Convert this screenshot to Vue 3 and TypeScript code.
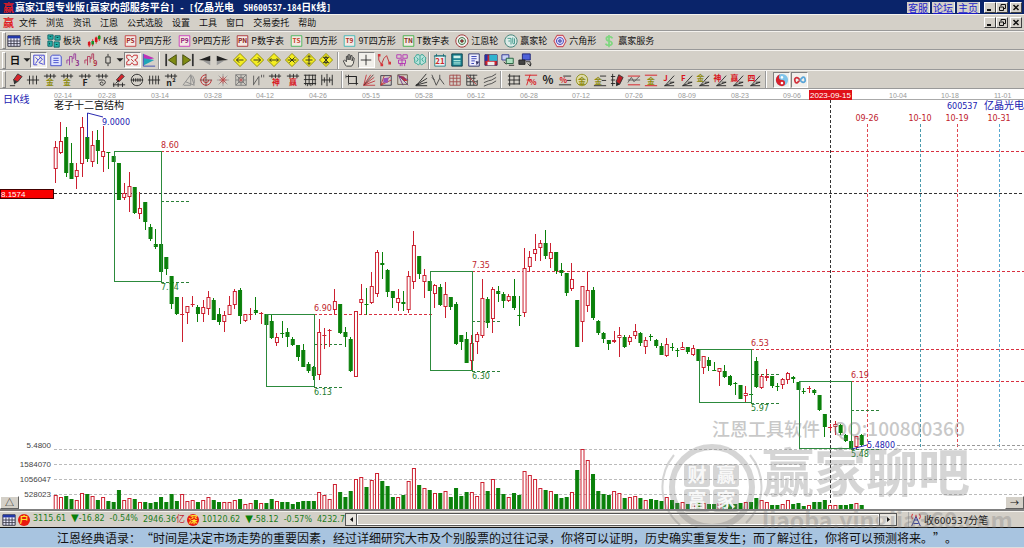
<script setup lang="ts">
interface Shape { d?: string; s?: string; f?: string; w?: number; t?: string; x?: number; y?: number; z?: number }
interface Candle { high: number; low: number; top: number; bottom: number; up: boolean; vol: number }

const BLACK = '#222'
const RED = '#d8141c'
const OLIVE = '#8c8a10'
const line = (d: string, s = BLACK, w = 1): Shape => ({ d, s, w })
const fill = (d: string, f: string, s = 'none'): Shape => ({ d, f, s })
const text = (t: string, x: number, y: number, f: string, z: number): Shape => ({ t, x, y, f, z })
const badge = (t: string, edge: string, ink: string): Shape[] => [
  fill('M1.5 1.5H14.5V14.5H1.5Z', '#f4e9e4', edge), text(t, 8, 11, ink, 8),
]
const comb = 'M1 3.5H15M4.5 1V6M8.5 1V6M12.5 1V6'
const fan = 'M2 14.5H15M2 14L15 10.5M2 14L15 6M3 14L14 1'
const diamond = fill('M8 0.5L15.5 8L8 15.5L0.5 8Z', '#f5ee20', '#8a8600')
const dia = (d: string): Shape[] => [diamond, line(d, '#222', 1)]
const signFan = (t: string, c: string): Shape[] => [line('M4 14.5H15M4 14.5L15 10.5M5 14L15 3M10 10.5H15'), text(t, 5, 9, c, 9)]

const icons: Record<string, Shape[]> = {
  table: [fill('M1 2H15V14H1Z', '#eef', '#223'), fill('M1 2H15V5H1Z', '#2338a8'), line('M1 8H15M1 11H15M4.5 5V14M8 5V14M11.5 5V14', '#334')],
  blocks: [fill('M1 1H7V6H1ZM9 2H15V7H9ZM1 8H6V14H1ZM8 9H14V15H8Z', '#27b5ac', '#0b5c60'), line('M3 3H5M11 4H13M3 10V12M10 12H12', '#033')],
  kline: [line('M2.5 8V15M6.5 6V14M10.5 3V11M14 1V8', RED), fill('M1 9H4V13H1ZM9 4H12V9H9Z', RED), fill('M5 8H8V12H5ZM12.5 2H15.5V6H12.5Z', '#189028')],
  ps: badge('PS', '#c12b30', '#9d1b1b'),
  p9: badge('P9', '#c728b8', '#941b77'),
  pn: badge('PN', '#a31f25', '#861515'),
  ts: badge('TS', '#35b04c', '#c33b22'),
  t9: badge('T9', '#2bb3b3', '#b0332c'),
  tn: badge('TN', '#2fab3a', '#7e2d1d'),
  wheel: [fill('M8 1A7 7 0 1 1 7.9 1Z', '#eee', '#9c2323'), fill('M8 4A4 4 0 1 1 7.9 4Z', '#dff0dd', '#2b5f30'), fill('M8 6.5A1.5 1.5 0 1 1 7.9 6.5Z', '#c33', '#333')],
  winwheel: [fill('M8 1A7 7 0 1 1 7.9 1Z', '#dcece8', '#327a70'), line('M4 5H8V12M5 8H7M10 4V10Q10 12 12 11V5', '#389486')],
  hexagon: [fill('M4.5 1.5H11.5L15 8L11.5 14.5H4.5L1 8Z', '#f2dce4', '#bf2638'), fill('M8 4A4 4 0 1 1 7.9 4Z', '#d6d9fa', '#3038bd'), fill('M8 6.5A1.5 1.5 0 1 1 7.9 6.5Z', '#88c', '#339')],
  dollar: [line('M12 5Q11 3 8 3Q5 3 5 5Q5 7.5 8 8Q11.5 8.5 11.5 11Q11 13 8 13Q5 13 4 11M8 1V15', '#7fd67f', 2)],
  day: [text('日', 8, 12, '#111', 12)],
  drop: [fill('M4 6H12L8 10Z', '#222')],
  net: [line('M2 2.5H14V13.5M2 13.5V2.5M4 5L7 8L4 12M8 4L12 7L8 11L13 13M11 4L7 8M2 13.5H6', '#3436d0')],
  doc: [fill('M4 2.5H12L14 4V14.5H2V4Z', '#dfe3ff', '#3a45c9'), line('M5 6H11M5 8.5H11M5 11H11', '#3a45c9')],
  wave3: [line('M1 12V8H4V14M4 8V4H7V11M7 6H9V1H11V8', '#993a9c'), text('3', 13, 15, '#8a2a8a', 8)],
  wave9: [line('M1 12V8H4V14M4 8V4H7V11M7 6H9V1H11V8', '#b03358'), text('9', 13, 15, '#b02e40', 8)],
  bar: [line('M8 1V4M8 12V15'), fill('M5.5 4.5H10.5V11.5H5.5Z', '#d4d0c8', '#222')],
  spark: [line('M2 2.5H6L8 5L10 2.5H14V6L11 8L14 10V13.5H10L8 11L6 13.5H2V10L5 8L2 6ZM7 7L10 10', '#c02026', 1)],
  flag: [fill('M2 1L14 6L2 9Z', '#c032b8'), fill('M2 6L14 8L2 14Z', '#20a5b8'), line('M1.5 1V15H15', '#3243b0')],
  first: [fill('M14 2V14L5 8Z', '#7f8b12', '#3d4409'), line('M2.5 1V15', '#333', 2)],
  last: [fill('M2 2V14L11 8Z', '#7f8b12', '#3d4409'), line('M13.5 1V15', '#333', 2)],
  prev: [fill('M14 3V9L1 8Z', '#222'), fill('M14 9V14L6 9Z', '#999')],
  next: [fill('M2 3V9L15 8Z', '#222'), fill('M2 9V14L10 9Z', '#999')],
  dleft: dia('M4 8H12M7 5L4 8L7 11'),
  dright: dia('M4 8H12M9 5L12 8L9 11'),
  dboth: dia('M3 8H13M5 6L3 8L5 10M11 6L13 8L11 10'),
  din: dia('M3 8H13M5 5L8 8L5 11M11 5L8 8L11 11'),
  dup: dia('M8 3V13M6 5L8 3L10 5M6 11L8 13L10 11M4 8H12'),
  ddown: dia('M8 3V13M5 5H11L8 8L5 5M5 11H11L8 8L5 11'),
  hand: [fill('M4 14L1.5 9L3 8L5 10V4L6.5 3.5L7 8V2L9 2V8L10 3H11.5V9L13 5L14 6L13 12L11 15H5Z', '#e8e4da', '#333')],
  cross: [line('M8 2V14M2 8H14', '#222', 1)],
  zig: [line('M2 3V8L5 13L8 6L11 3L14 11', '#c0262c'), fill('M1 1H4V4H1ZM4 12H7V15H4ZM13 10H16V13H13Z', '#d8343a')],
  cluster: [line('M2 2H7V6H2ZM9 2H14V6H9ZM4 8H12V12H4ZM8 6V15M6 15V12M11 12V15', '#b22fb2')],
  brain: [fill('M7 2Q3 1 3 4Q0 5 2 8Q1 12 4 12Q6 15 8 12Q10 15 12 12Q16 11 14 8Q16 5 13 4Q12 1 9 2L8 3Z', '#b9e3db', '#2a9d8d'), line('M8 3V12M4 5L6 7L4 10M12 5L10 7L12 10', '#2a9d8d')],
  calendar: [fill('M2 3H14V15H2Z', '#e9f3f4', '#2a7d86'), line('M1 3.5H15M4 1V4M12 1V4', '#1d6a72', 1), text('21', 8, 13, '#d02a2a', 9)],
  calc: [fill('M2 1H14V15H2Z', '#178090', '#0b3b48'), fill('M4 3H12V6H4Z', '#cfeee8'), line('M4 8.5H12M4 10.5H12M4 12.5H12', '#cfe', 1)],
  notes: [fill('M2 1H14V15H2Z', '#eef', '#222a66'), line('M5 4H11M5 6.5H11M5 9H9M5 12H8', '#2a38b0', 1), fill('M10 9L14 10L11 14Z', '#336')],
  save: [fill('M1 2H15V14H1Z', '#cf2430', '#312055'), fill('M6 2H15V9H6Z', '#2fb3cf'), fill('M4 10H12V14H4Z', '#eee'), fill('M1 2H4V9H1Z', '#2334a8')],
  screens: [fill('M1 2H9V8H1Z', '#c8d0f4', '#27318f'), fill('M6 6H14V12H6Z', '#aee0c0', '#1e5a38'), line('M9 14H15M3 10L6 13', '#222', 1)],
  send: [fill('M5 1H14V8H5Z', '#4f62d8', '#1a2070'), fill('M1 8H8V13H1Z', '#444', '#222'), line('M9 10H14V14M11 12L14 15L15 12', '#222', 1)],
  pencil: [fill('M5 8L10 1L15 4L10 10Z', '#d5252c', '#333'), fill('M5 8L10 10L6 13Z', '#333'), line('M1 14.5H7', '#222', 1)],
  ticks3: [line('M1 8H15M4 3V13M8 3V13M12 3V13', '#222', 1)],
  combgold: [line(comb), text('金', 8, 14, OLIVE, 9)],
  combf: [line(comb), text('F', 8, 15, '#222', 10)],
  combspiral: [line(comb), line('M4 8H10Q14 11 9 14Q5 14 6 11Q9 9 9 12', '#222')],
  pencilbase: [fill('M5 8L11 1L14 4L8 10Z', '#d5252c', '#333'), line('M1 13.5H15M2 11V16M7 11V16M12 11V16M4 12L8 8')],
  circleticks: [line('M8 1.5A6.5 6.5 0 1 1 7.9 1.5Z'), line('M1 8H15M4 6V10M6.5 6V10M9 6V10M11.5 6V10')],
  ticks4: [line('M1 8H15M3 3V13M6.5 3V13M10 3V13M13 3V13')],
  combn: [line(comb), text('n²', 8, 15, '#222', 10)],
  compass: [line('M1 14L10 2V14M4 10L14 14L10 2M2 14H10M12 3Q15 7 14 12', '#888')],
  redcircle: [line('M8 2A6 6 0 1 0 14 8M8 5A3 3 0 1 0 11 8', '#c0272d'), line('M1 8H15M8 1V15', '#744')],
  burst: [line('M8 1V15M1 8H15M3 3L13 13M13 3L3 13', '#999'), line('M8 4V12M4 8H12M5 5L11 11M11 5L5 11', '#c34848')],
  web: [line('M2 2H14V14H2ZM5 5H11V11H5ZM2 2L14 14M14 2L2 14M8 2V14M2 8H14', '#777'), fill('M6.5 6.5H9.5V9.5H6.5Z', '#b66')],
  ncurve: [line('M3 3V14M3 13L9 4V14M12 2V5M14.5 2V5', '#555')],
  combshen: [line(comb), text('神', 9, 14, RED, 9)],
  combwin: [line(comb), text('赢', 8, 14, RED, 9)],
  lattice: [line('M1 2.5H15M1 7.5H15M3 2V14M7 2V14M11 2V14M14 2V14M1 12H15M5 12V15M9 12V15')],
  hmark: [line('M2 2V14M14 2V14M8 1V15M2 8H14M5 5V11M11 5V11')],
  corner: [line('M4 2V12H15M1 4H13V14M4 4H13V12'), line('M1 2V6M4 14V12', '#666')],
  redfan: [line('M2 14L5 2M2 14L10 2M2 14L14 5M2 14L15 9M2 14H15', '#c0343a'), line('M2 14L13 2', '#533')],
  boxfan: [line('M2 3H14V14H2Z', '#334'), line('M2 14L6 3M2 14L14 3M2 14L14 8', '#c0343a'), fill('M5 6L11 5L10 11L5 11Z', '#9452b4')],
  boxfan2: [line('M2 2H13V13H2Z', '#654'), fill('M3 3L9 4L13 9L9 9Z', '#c0343a'), line('M3 3L14 14M3 3L8 14M3 3L14 8', '#733482')],
  blackfan: [line(fan)],
  vee: [line('M1 2L6 14L10 6L15 13M10 2V6M1 5L4 8', '#444')],
  redgrid: [line('M2 2.5H14V14H2ZM2 6H14M2 10H14M6 2V14M10 2V14', '#a24a4a')],
  grid: [line('M2 2V14H14M2 2.5H14M2 6H12M2 10H14M6 2V14M10 2V14M14 8V14', '#333'), line('M2 2L13 13', '#b44')],
  channel: [line('M1 7L6 5L10 4L15 1M1 11L6 9L10 8L15 5M1 15L6 13L10 12L15 9', '#444')],
  ladder: [line('M3 1V15M1 3.5H15M1 8H15M1 12.5H15M8 3V13M14 3V13')],
  redpct: [line('M1 2.5H15M3 14L7 2M3 8H8', RED), text('%', 10, 14, RED, 9)],
  pct: [text('%', 8, 13, '#222', 13)],
  pctlines: [line('M6 3.5H15M10 8.5H15M1 13.5H15'), text('%', 6, 11, RED, 9)],
  goldring: [fill('M8 1.5A6.5 6.5 0 1 1 7.9 1.5Z', '#dcd9a8', OLIVE), text('金', 8, 12, OLIVE, 9)],
  goldlines: [line('M8 3.5H15M10 8.5H15M1 14.5H15'), text('金', 6, 12, OLIVE, 9)],
  pencilbar: [line('M3 1V15M1 4H6M1 8H6M1 12H6'), fill('M7 10L10 2L15 5L11 13Z', '#b71f26', '#333'), fill('M7 10L11 13L7 15Z', '#222')],
  redwave: [line('M1 3.5H15M1 13.5H15', RED), line('M1 11L5 5L8 10L14 4M1 8H15', '#555')],
  goldred: [line('M1 2.5H15M1 14.5H15', RED), text('金', 8, 12, OLIVE, 9)],
  jfan: signFan('J', RED), ffan: signFan('F', RED), goldfan: signFan('金', OLIVE),
  shenfan: signFan('神', RED), winfan: signFan('赢', RED), fourfan: signFan('四', RED),
  yinyang: [fill('M8 1A7 7 0 1 1 7.9 1Z', '#7fc4ea'), fill('M8 1A7 7 0 0 0 8 15A3.5 3.5 0 0 0 8 8A3.5 3.5 0 0 1 8 1Z', '#d8202a'), fill('M8 3.5A1.5 1.5 0 1 1 7.9 3.5ZM8 10A1.5 1.5 0 1 1 7.9 10Z', '#fff')],
  infinity: [line('M8 8Q4 3 2 7Q2 12 5 11L8 8', '#d2303a', 2), line('M8 8Q12 13 14 9Q14 4 11 5L8 8', '#5aa5d8', 2)],
  antenna: [line('M8 4L3 15M8 4L13 15M6 8H10M5 12H11', '#26308f', 1), line('M4 1Q2 4 4 7M12 1Q14 4 12 7M8 2V5', RED, 1)],
}

const menus = ['文件', '浏览', '资讯', '江恩', '公式选股', '设置', '工具', '窗口', '交易委托', '帮助']
const links = ['客服', '论坛', '主页']
const tools = [
  ['table', '行情'], ['blocks', '板块'], ['kline', 'K线'], ['ps', 'P四方形'], ['p9', '9P四方形'], ['pn', 'P数字表'],
  ['ts', 'T四方形'], ['t9', '9T四方形'], ['tn', 'T数字表'], ['wheel', '江恩轮'], ['winwheel', '赢家轮'], ['hexagon', '六角形'], ['dollar', '赢家服务'],
]
const viewGroups = [
  { w: 'g-period', items: ['day', 'drop', 'net', 'doc', 'wave3', 'wave9', 'bar', 'drop', 'spark', 'flag'] },
  { w: 'g-move', items: ['first', 'last', 'prev', 'next', 'dleft', 'dright', 'dboth', 'din', 'dup', 'ddown'] },
  { w: 'g-point', items: ['hand', 'cross', 'zig', 'cluster', 'brain'] },
  { w: 'g-extra', items: ['calendar', 'calc', 'notes', 'save', 'screens', 'send'] },
]
const drawGroups = [
  { w: 'g-ruler', items: ['pencil', 'ticks3', 'combgold', 'combgold', 'combf', 'combspiral', 'pencilbase', 'circleticks', 'ticks4', 'combn', 'compass', 'redcircle', 'burst', 'web', 'ncurve', 'combshen', 'combwin', 'lattice', 'hmark'] },
  { w: 'g-fan', items: ['corner', 'redfan', 'boxfan', 'boxfan2', 'blackfan', 'vee', 'redgrid', 'grid', 'channel'] },
  { w: 'g-level', items: ['ladder', 'redpct', 'pct', 'pctlines', 'goldring', 'goldlines', 'pencilbar', 'redwave', 'goldred', 'jfan', 'ffan', 'goldfan', 'shenfan', 'winfan', 'fourfan'] },
  { w: 'g-sign', items: ['yinyang', 'infinity'] },
]
const pressed = new Set(['net', 'spark', 'cross', 'yinyang', 'infinity'])

// high, low, body top, body bottom, direction
const rows = `141,183,147,169,r 122,154,141,153,r 127,177,137,173,g 143,179,163,179,g 163,189,170,177,r 117,177,127,164,r 113,162,137,159,g 131,167,145,162,r 130,164,140,151,g 126,172,151,157,r
152,169,152,153,g 156,162,156,162,g 163,200,163,200,g 183,200,193,198,r 172,212,186,197,r 187,214,187,213,g 192,219,208,214,r 202,230,202,222,g 224,241,227,239,g 229,249,244,247,g
244,272,244,272,g 257,275,257,269,g 276,309,276,304,g 297,315,297,314,g 297,342,314,314,r 306,324,306,313,r 296,307,304,304,r 305,322,307,314,g 300,322,307,314,r 291,315,297,309,r
298,320,300,320,g 308,325,314,322,g 311,332,315,322,r 296,315,305,315,r 289,309,291,305,r 288,324,290,316,g 314,322,314,321,r 308,320,314,314,r 297,315,310,313,g 312,324,313,314,r
314,325,314,325,g 314,339,321,338,g 333,346,337,343,r 321,338,333,333,g 328,347,332,337,g 337,346,339,345,g 345,361,345,357,g 344,367,350,367,g 362,373,364,371,g 366,380,367,376,g
319,380,332,375,r 328,349,335,336,r 329,347,330,331,r 289,314,301,310,r 304,334,304,333,g 327,347,332,337,g 337,372,339,371,g 311,377,311,377,r 284,315,299,303,r 288,315,304,304,g
272,304,286,303,r 250,297,252,294,r 252,279,263,265,g 269,297,270,292,g 291,308,291,298,g 289,311,298,303,r 291,311,302,304,g 271,313,276,310,r 231,289,245,282,r 256,279,256,274,g
269,298,275,282,r 281,291,281,291,g 284,308,285,294,r 284,306,287,305,g 282,318,294,307,r 297,310,297,307,g 302,345,304,344,g 335,350,335,342,g 332,363,339,363,g 335,370,343,361,r
332,354,334,342,r 279,338,298,336,r 297,328,299,323,g 287,333,289,319,r 286,302,291,294,g 292,308,294,301,g 294,302,296,301,r 279,310,296,308,g 296,326,315,315,g 248,317,268,313,r
251,272,257,267,r 234,261,249,254,r 240,261,243,248,r 230,259,243,256,g 243,268,252,259,r 252,274,252,271,g 263,276,270,273,g 273,296,273,293,g 263,291,279,289,r 300,347,300,347,g
286,342,286,322,r 272,312,290,306,r 287,320,290,318,g 320,335,321,333,g 332,343,333,339,g 340,350,340,344,g 331,343,340,342,r 327,357,335,338,r 335,348,337,347,g 335,345,337,342,r
324,339,331,336,r 332,346,333,343,g 337,354,340,347,r 334,341,336,337,g 339,348,340,346,g 343,355,346,355,g 338,357,344,356,r 343,351,347,347,g 348,357,350,351,g 342,350,347,350,r
347,354,347,352,g 345,356,348,355,r 349,361,349,361,g 356,374,356,368,r 357,371,360,366,g 362,371,370,370,g 368,386,368,372,r 365,378,371,377,g 375,386,376,385,g 382,395,383,384,g
385,399,385,399,g 386,402,393,396,r 392,396,394,394,g 357,388,361,387,g 374,389,376,388,r 369,381,376,378,r 376,388,376,386,g 383,391,386,386,g 378,389,379,385,r 372,384,373,380,r
376,383,377,379,g 382,390,382,390,g 388,394,391,391,g 386,393,388,389,r 389,395,390,393,g 395,411,395,410,g 414,437,414,427,g 424,431,427,428,r 421,435,424,427,r 424,435,425,433,g
434,442,435,441,g 440,449,441,449,g 436,449,436,447,r 434,446,435,445,g`
const volumes = [
  14, 12, 13, 10, 9, 16, 15, 13, 9, 12, 8, 7, 19, 9, 11, 10, 7, 7, 6, 7, 12, 7, 15, 8, 15, 8, 9, 7, 9, 12, 9, 7, 7, 7, 9, 10, 5, 6, 9, 6,
  6, 10, 8, 7, 7, 5, 7, 8, 8, 8, 17, 14, 10, 25, 17, 12, 18, 30, 32, 22, 29, 36, 28, 23, 12, 12, 14, 28, 41, 24, 21, 19, 16, 16, 18, 12, 21, 13, 17, 17,
  13, 27, 18, 30, 21, 15, 12, 16, 14, 38, 34, 30, 21, 19, 18, 15, 11, 12, 17, 39, 60, 49, 35, 18, 15, 14, 18, 16, 11, 12, 13, 11, 9, 10, 9, 8, 12, 9, 6, 7,
  5, 5, 7, 6, 5, 5, 6, 5, 5, 5, 6, 7, 7, 11, 9, 7, 4, 4, 5, 9, 5, 6, 3, 4, 7, 7, 9, 4, 4, 4, 4, 5, 6, 4,
]
const candles: Candle[] = rows.split(/\s+/).map((row, i) => {
  const p = row.split(',')
  return { high: +p[0], low: +p[1], top: +p[2], bottom: +p[3], up: p[4] === 'r', vol: volumes[i] }
})
const STEP = (861.7 - 55.7) / (candles.length - 1)
const cx = (i: number) => 55.7 + STEP * i
const wick = (i: number) => Math.floor(cx(i)) + 0.5

// Dashed rules as explicit 3px segments with 2px gaps
const dashH = (x1: number, x2: number, y: number) =>
  `M${x1} ${y + 0.5}` + 'h3m2 0'.repeat(Math.floor((x2 - x1) / 5)) + 'h3'
const dashV = (y1: number, y2: number, x: number) =>
  `M${x + 0.5} ${y1}` + 'v3m0 2'.repeat(Math.floor((y2 - y1) / 5)) + 'v3'

const ticks: [number, string][] = [
  [54, '02-14'], [98, '02-28'], [151, '03-14'], [204, '03-28'], [256, '04-12'], [309, '04-26'], [362, '05-15'], [415, '05-28'], [467, '06-12'],
  [520, '06-28'], [572, '07-12'], [625, '07-26'], [678, '08-09'], [731, '08-23'], [783, '09-06'], [889, '10-04'], [941, '10-18'], [994, '11-01'],
]
const boxes = [
  { x: 114, y: 151, w: 47, h: 130, end: 1024, hi: '8.60', lo: '7.74', mid: 201 },
  { x: 266, y: 314, w: 48, h: 72, end: 430, hi: '6.90', lo: '6.13', mid: 344 },
  { x: 430, y: 271, w: 42, h: 99, end: 1024, hi: '7.35', lo: '6.30', mid: 321 },
  { x: 699, y: 349, w: 52, h: 53, end: 1024, hi: '6.53', lo: '5.97', mid: 374 },
  { x: 799, y: 381, w: 52, h: 67, end: 1024, hi: '6.19', lo: '5.48', mid: 410 },
]
const turns: [number, string, string][] = [[867, '09-26', '#e04850'], [920, '10-10', '#4a9aac'], [957, '10-19', '#e04850'], [999, '10-31', '#58a8d0']]
const levels: [number, string][] = [[449, '5.4800'], [464, '1584070'], [479, '1056047'], [494, '528023']]
</script>

<template>
  <div class="app" lang="zh-CN">
    <header class="title">
      <span class="logo">赢</span>
      <h1>赢家江恩专业版<i>[</i>赢家内部服务平台<i>] - [</i>亿晶光电<i>&nbsp; SH600537-184</i>日<i>K</i>线<i>]</i></h1>
      <nav class="links"><a v-for="l in links" :key="l" href="#">{{ l }}</a></nav>
      <div class="win">
        <button aria-label="最小化"><svg viewBox="0 0 10 9"><path d="M2 7H6" stroke="#111" stroke-width="2" /></svg></button>
        <button aria-label="还原"><svg viewBox="0 0 10 9"><path d="M4 3V1.5H8.5V5.5H7M2.5 4H6.5V7.5H2.5Z" fill="none" stroke="#111" /></svg></button>
        <button class="close" aria-label="关闭"><svg viewBox="0 0 10 9"><path d="M2.5 2L7.5 7M7.5 2L2.5 7" stroke="#111" stroke-width="1.5" /></svg></button>
      </div>
    </header>

    <div class="menu">
      <span class="logo">赢</span>
      <button v-for="m in menus" :key="m" class="item">{{ m }}</button>
      <div class="win">
        <button aria-label="最小化窗口"><svg viewBox="0 0 10 9"><path d="M2 7H6" stroke="#111" stroke-width="2" /></svg></button>
        <button aria-label="还原窗口"><svg viewBox="0 0 10 9"><path d="M4 3V1.5H8.5V5.5H7M2.5 4H6.5V7.5H2.5Z" fill="none" stroke="#111" /></svg></button>
        <button class="close" aria-label="关闭窗口"><svg viewBox="0 0 10 9"><path d="M2.5 2L7.5 7M7.5 2L2.5 7" stroke="#111" stroke-width="1.5" /></svg></button>
      </div>
    </div>

    <div class="bar named">
      <button v-for="[icon, label] in tools" :key="icon" class="tool" :class="{ boxed: icon.length === 2 }">
        <svg class="ico" viewBox="0 0 16 16">
          <template v-for="(s, k) in icons[icon]" :key="k">
            <text v-if="s.t" :x="s.x" :y="s.y" :fill="s.f" :font-size="s.z" font-weight="bold" text-anchor="middle">{{ s.t }}</text>
            <path v-else :d="s.d" :fill="s.f ?? 'none'" :stroke="s.s" :stroke-width="s.w ?? 1" />
          </template>
        </svg>
        {{ label }}
      </button>
    </div>

    <div v-for="(groups, r) in [viewGroups, drawGroups]" :key="r" class="bar" :class="r ? 'draw' : 'view'">
      <div v-for="g in groups" :key="g.w" class="group" :class="g.w">
        <button v-for="(n, j) in g.items" :key="j" class="cell" :class="{ pressed: pressed.has(n) }" :aria-label="n">
          <svg class="ico" viewBox="0 0 16 16">
            <template v-for="(s, k) in icons[n]" :key="k">
              <text v-if="s.t" :x="s.x" :y="s.y" :fill="s.f" :font-size="s.z" font-weight="bold" text-anchor="middle">{{ s.t }}</text>
              <path v-else :d="s.d" :fill="s.f ?? 'none'" :stroke="s.s" :stroke-width="s.w ?? 1" />
            </template>
          </svg>
        </button>
      </div>
    </div>

    <div class="work">
      <main class="chart">
        <svg class="plot" viewBox="0 89 1024 420" role="img" aria-label="日K线">
          <path d="M54 99.5H1024" stroke="#aaa" />
          <g class="tick"><text v-for="[x, t] in ticks" :key="t" :x="x" y="98">{{ t }}</text></g>
          <text class="cn" x="3" y="103" fill="#2020b0">日K线</text>
          <text class="cn" x="54" y="109" fill="#111">老子十二宫结构</text>
          <text class="num blue" x="947" y="109">600537</text>
          <text class="cn" x="984" y="109" fill="#2020b0">亿晶光电</text>

          <g class="levels">
            <template v-for="[y, t] in levels" :key="t">
              <path :d="dashH(54, 1024, y)" />
              <text x="51" :y="y === 449 ? 448 : y + 3">{{ t }}</text>
            </template>
          </g>

          <path class="hair" :d="dashH(54, 1024, 193)" />
          <path class="hair" :d="dashV(100, 509, 830)" />

          <g v-for="[x, t, c] in turns" :key="t">
            <path class="turn" :d="dashV(124, 446, x)" :stroke="c" />
            <text class="num red" :x="x" y="121" text-anchor="middle">{{ t }}</text>
          </g>

          <g v-for="b in boxes" :key="b.hi">
            <path class="dash-red" :d="dashH(b.x + b.w, b.end, b.y)" />
            <path class="dash-green" :d="dashH(b.x + b.w, b.x + b.w + 26, b.mid) + dashH(b.x + b.w, b.x + b.w + 26, b.y + b.h + 1)" />
            <text class="num red" :x="b.x + b.w" :y="b.y - 3">{{ b.hi }}</text>
            <text class="num green" :x="b.x + b.w" :y="b.y + b.h + 9">{{ b.lo }}</text>
          </g>

          <g v-for="(c, i) in candles" :key="i" :class="c.up ? 'up' : 'down'">
            <path :d="`M${wick(i)} ${c.high}V${c.low}`" />
            <path v-if="c.bottom - c.top < 2" :d="`M${cx(i) - 2} ${c.top + 0.5}h4`" />
            <rect v-else :x="cx(i) - 1.5" :y="c.top + 0.5" width="3" :height="c.bottom - c.top - 1" />
            <rect :x="cx(i) - 1.5" :y="509.5 - c.vol" width="3" :height="c.vol" />
          </g>

          <rect v-for="b in boxes" :key="b.x" class="frame" :x="b.x + 0.5" :y="b.y + 0.5" :width="b.w" :height="b.h" />

          <path d="M87.5 138V113L103 117" fill="none" stroke="#2a2ab0" />
          <text class="num blue" x="102" y="125">9.0000</text>
          <path d="M852 449L867 445" stroke="#2a2ab0" />
          <path :d="dashH(897, 1024, 445)" stroke="#999" />
          <text class="num blue" x="867" y="448">5.4800</text>

          <rect x="0.5" y="189.5" width="53" height="9" fill="#f80000" stroke="#400" />
          <text class="tag" x="1" y="197">8.1574</text>
          <rect x="809" y="90" width="43" height="10" fill="#e01018" />
          <text class="tag" x="810" y="98">2023-09-15</text>
        </svg>
        <button class="corner left" aria-label="展开">△</button>
        <button class="corner right" aria-label="向右">→</button>
      </main>

      <footer class="status">
        <svg class="ico" viewBox="0 0 16 16"><path v-for="(s, k) in icons.table" :key="k" :d="s.d" :fill="s.f ?? 'none'" :stroke="s.s" /></svg>
        <span class="coin">户</span>
        <span class="quote"><span>3115.61</span><span><b>▼</b>-16.82</span><span>-0.54%</span><span>2946.36<em>亿</em></span></span>
        <span class="coin">深</span>
        <span class="quote"><span>10120.62</span><span><b>▼</b>-58.12</span><span>-0.57%</span><span>4232.7</span></span>
        <div class="scroll">
          <button aria-label="向左滚动"><svg viewBox="0 0 9 9"><path d="M6 2V7L3 4.5Z" /></svg></button>
          <span class="thumb"></span>
          <button class="fwd" aria-label="向右滚动"><svg viewBox="0 0 9 9"><path d="M3 2V7L6 4.5Z" /></svg></button>
        </div>
        <span class="feed">
          <svg class="ico" viewBox="0 0 16 16"><path v-for="(s, k) in icons.antenna" :key="k" :d="s.d" fill="none" :stroke="s.s" /></svg>
          <span>收<i>600537</i>分笔</span>
        </span>
      </footer>

      <svg class="mark" viewBox="0 89 1024 439" aria-hidden="true">
        <g fill="#777" opacity="0.4">
          <text x="712" y="436" font-size="18" font-weight="500">江恩工具软件</text>
          <text x="833" y="436" font-size="19" font-weight="500">QQ:100800360</text>
        </g>
        <g fill="#777" opacity="0.3">
          <text x="762" y="492" font-size="52" font-weight="bold">赢家聊吧</text>
          <text x="762" y="529" font-size="23" font-weight="bold">liaoba.yingjia360.com</text>
          <circle cx="712" cy="487" r="40" fill="none" stroke="#777" stroke-width="6" />
          <path d="M674 455A50 50 0 0 0 680 525M750 455A50 50 0 0 1 746 523" fill="none" stroke="#777" stroke-width="2" />
          <rect x="684" y="464" width="26" height="23" rx="3" />
          <rect x="713" y="464" width="26" height="23" rx="3" />
          <rect x="684" y="489" width="26" height="23" rx="3" />
          <rect x="713" y="489" width="26" height="23" rx="3" />
        </g>
        <g fill="#fff" font-size="19" font-weight="bold" opacity="0.85" text-anchor="middle">
          <text x="697" y="482">财</text><text x="726" y="482">赢</text>
          <text x="697" y="507">富</text><text x="726" y="507">家</text>
        </g>
      </svg>
    </div>

    <p class="ticker">江恩经典语录：“时间是决定市场走势的重要因素，经过详细研究大市及个别股票的过往记录，你将可以证明，历史确实重复发生；而了解过往，你将可以预测将来。”。</p>
  </div>
</template>

<style>
body { margin: 0; background: #fff; }
</style>

<style scoped>
.app { font: 9px/12px "Noto Sans CJK SC", "Liberation Sans", sans-serif; color: #111; background: #d4d0c8; }
.app *, .app { box-sizing: border-box; }
button { font: inherit; color: inherit; background: none; border: 0; padding: 0; margin: 0; white-space: nowrap; }
i { font-style: normal; }
.ico { width: 14px; height: 14px; display: block; flex: none; overflow: visible; }

.title { display: flex; align-items: center; height: 14px; padding: 0 2px 0 3px; background: #0a246a; color: #fff; }
.title h1 { flex: 1; margin: 0; font-size: 10px; line-height: 13px; font-weight: bold; white-space: nowrap; }
.title h1 i { font: bold 8px/12px "DejaVu Sans Mono", monospace; white-space: pre; }
.logo { width: 12px; color: #e01c24; font-size: 11px; font-weight: bold; line-height: 13px; }
.links { display: flex; gap: 2px; margin-right: 4px; }
.links a { width: 23px; height: 11px; font-size: 10px; line-height: 11px; text-align: center; color: #1c1cc8; background: #d4d0c8; border: 1px solid #eee; border-width: 0 1px 0 0; text-decoration: underline; }
.win { display: flex; }
.win button { width: 12px; height: 11px; background: #d4d0c8; border: 1px solid; border-color: #fff #404040 #404040 #fff; }
.win .close { margin-left: 2px; }
.win svg { display: block; width: 10px; height: 9px; }

.menu { display: flex; align-items: center; gap: 9px; height: 17px; padding: 0 2px 0 3px; border-top: 1px solid #f4f2ee; border-bottom: 1px solid #999; }
.menu .logo { margin-right: -5px; }
.menu .win { margin-left: auto; }

.bar { display: flex; align-items: center; height: 19px; border-top: 1px solid #f4f2ee; border-bottom: 1px solid #999; padding-left: 5px; }
.bar.view { height: 20px; }
.bar::before { content: ""; width: 2px; height: 15px; margin-left: -3px; border: 1px solid; border-color: #fff #888 #888 #fff; }
.named { gap: 6px; }
.named::before { margin-right: -5px; }
.tool { display: flex; align-items: center; gap: 2px; }
.tool.boxed .ico { width: 13px; }
.group { display: flex; justify-content: space-between; align-items: center; height: 17px; }
.group + .group { border-left: 1px solid #999; box-shadow: inset 1px 0 #fff; }
.cell { width: 17px; height: 16px; display: flex; align-items: center; justify-content: center; border: 1px solid transparent; }
.cell.pressed { background: #f1efea; border-color: #808080 #fff #fff #808080; }
.g-period { width: 152px; }
.g-period .cell:nth-child(2), .g-period .cell:nth-child(8) { width: 7px; }
.g-move { width: 179px; padding: 0 2px 0 3px; }
.g-point { width: 91px; padding-left: 2px; }
.g-extra { width: 106px; padding-left: 2px; }
.g-ruler { width: 335px; padding: 0 5px 0 1px; }
.g-fan { width: 159px; padding: 0 2px 0 1px; }
.g-level { width: 265px; padding: 0 2px 0 4px; }
.g-sign { width: 44px; padding: 0 1px 0 7px; }

.work { position: relative; }
.chart { position: relative; background: #fff; border-bottom: 2px solid #808080; }
.plot { display: block; width: 100%; height: auto; }
.tick { font: 7px "Liberation Sans", sans-serif; fill: #999; }
.cn { font-size: 10px; }
.levels path { stroke: #bbb; }
.levels text { font: 8px "Liberation Sans", sans-serif; fill: #444; text-anchor: end; }
.num { font: 8px "DejaVu Sans", sans-serif; }
.red { fill: #c01c2c; }
.green { fill: #1c7c2c; }
.blue { fill: #2020b0; }
.tag { font: 8px "Liberation Sans", sans-serif; fill: #fff; }
.hair, .turn, .dash-red, .dash-green { fill: none; }
.hair { stroke: #333; }
.dash-red { stroke: #d83040; }
.dash-green { stroke: #2c8038; }
.frame { fill: none; stroke: #2c8a3c; }
.up path, .up rect { stroke: #cc2030; fill: #fff; }
.down path, .down rect { stroke: #0a800a; fill: #0a800a; }
.corner { position: absolute; bottom: 0; width: 19px; height: 13px; background: #d4d0c8; border: 1px solid; border-color: #fff #606060 #606060 #fff; line-height: 10px; }
.corner.left { left: 0; }
.corner.right { right: 0; }

.status { display: flex; align-items: center; height: 17px; padding-left: 2px; border-top: 1px solid #f4f2ee; border-bottom: 1px solid #111; white-space: nowrap; }
.coin { width: 12px; height: 12px; margin: 0 3px 0 2px; border-radius: 50%; background: #e81810; color: #ffe030; font-size: 9px; line-height: 12px; text-align: center; font-weight: bold; }
.quote { display: flex; gap: 5px; font: 8px/12px "DejaVu Sans", sans-serif; color: #1c7c1c; }
.quote b { font: 10px/10px "DejaVu Sans", sans-serif; color: #0a800a; }
.quote em { font: 9px/12px "Noto Sans CJK SC", sans-serif; color: #c01c2c; }
.scroll { display: flex; flex: 1; height: 13px; border: 1px solid #555; background: #e8e5df; }
.scroll button { width: 11px; border-right: 1px solid #555; display: flex; align-items: center; justify-content: center; }
.scroll .fwd { border: 0; border-left: 1px solid #555; width: 17px; }
.scroll svg { width: 9px; height: 9px; fill: #111; }
.thumb { flex: 1; background: #d4d0c8; border: 1px solid #fff; }
.feed { display: flex; align-items: center; gap: 1px; width: 116px; height: 15px; margin-left: 11px; font-size: 10px; border-left: 1px solid #aaa; }
.feed i { font: 9px "DejaVu Sans", sans-serif; }
.mark { position: absolute; left: 0; top: 0; width: 100%; height: 100%; pointer-events: none; }
.ticker { margin: 0; height: 20px; padding: 0 18px 0 8px; text-align: center; text-spacing-trim: space-all; background: #a8c4e0; border-bottom: 1px solid #ddd; font-size: 12px; line-height: 19px; white-space: nowrap; overflow: hidden; }
</style>
